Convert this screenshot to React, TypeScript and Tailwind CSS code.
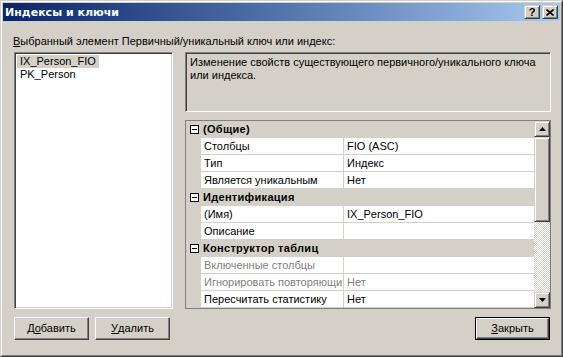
import React from 'react';

const font = { fontFamily: '"Liberation Sans", Arial, sans-serif' };
const boldFont = { fontFamily: '"DejaVu Sans", Verdana, sans-serif' };

const raised =
  'border border-t-white border-l-white border-r-[#404040] border-b-[#404040] shadow-[inset_-1px_-1px_#808080] bg-[#d4d0c8]';
const raisedSmall =
  'border border-t-[#d4d0c8] border-l-[#d4d0c8] border-r-[#404040] border-b-[#404040] shadow-[inset_1px_1px_#fff,inset_-1px_-1px_#808080] bg-[#d4d0c8]';
const sunken =
  'border border-t-[#808080] border-l-[#808080] border-r-white border-b-white shadow-[inset_1px_1px_#404040,inset_-1px_-1px_#d4d0c8]';

type Row =
  | { kind: 'cat'; label: string }
  | { kind: 'prop'; name: string; value: string; disabled?: boolean };

const rows: Row[] = [
  { kind: 'cat', label: '(Общие)' },
  { kind: 'prop', name: 'Столбцы', value: 'FIO (ASC)' },
  { kind: 'prop', name: 'Тип', value: 'Индекс' },
  { kind: 'prop', name: 'Является уникальным', value: 'Нет' },
  { kind: 'cat', label: 'Идентификация' },
  { kind: 'prop', name: '(Имя)', value: 'IX_Person_FIO' },
  { kind: 'prop', name: 'Описание', value: '' },
  { kind: 'cat', label: 'Конструктор таблиц' },
  { kind: 'prop', name: 'Включенные столбцы', value: '', disabled: true },
  { kind: 'prop', name: 'Игнорировать повторяющи', value: 'Нет', disabled: true },
  { kind: 'prop', name: 'Пересчитать статистику', value: 'Нет' },
];

const MinusBox = () => (
  <div className="w-[9px] h-[9px] border border-[#000] bg-white flex items-center justify-center">
    <div className="w-[5px] h-px bg-black" />
  </div>
);

const Arrow = ({ up }: { up?: boolean }) => (
  <svg width="7" height="4" viewBox="0 0 7 4">
    <path d={up ? 'M3.5 0 L7 4 L0 4 Z' : 'M0 0 L7 0 L3.5 4 Z'} fill="#000" />
  </svg>
);

const PropertyGrid = () => (
  <div className="h-[189px] border border-[#808080] bg-white flex">
    <div className="flex-1 flex flex-col">
      {rows.map((r, i) =>
        r.kind === 'cat' ? (
          <div key={i} className="h-[17px] bg-[#d4d0c8] flex items-center">
            <div className="w-[15px] flex justify-center pl-[1px]">
              <MinusBox />
            </div>
            <span className="pl-[2px] font-bold text-black tracking-[0.3px]">{r.label}</span>
          </div>
        ) : (
          <div key={i} className="h-[17px] flex">
            <div className="w-[15px] bg-[#d4d0c8]" />
            <div
              className={`w-[143px] border-b border-r border-[#d4d0c8] pl-[3px] pt-px flex items-center overflow-hidden whitespace-nowrap ${
                r.disabled ? 'text-[#808080]' : 'text-black'
              }`}
            >
              {r.name}
            </div>
            <div
              className={`flex-1 border-b border-[#d4d0c8] pl-[3px] pt-px flex items-center whitespace-nowrap ${
                r.disabled ? 'text-[#808080]' : 'text-black'
              }`}
            >
              {r.value}
            </div>
          </div>
        )
      )}
    </div>
    <div className="w-[16px] flex flex-col">
      <div className={`h-[16px] ${raisedSmall} flex items-center justify-center`}>
        <Arrow up />
      </div>
      <div className={`h-[85px] ${raisedSmall}`} />
      <div className="flex-1 bg-[repeating-conic-gradient(#d4d0c8_0_25%,#ffffff_0_50%)] bg-[length:2px_2px]" />
      <div className={`h-[16px] ${raisedSmall} flex items-center justify-center`}>
        <Arrow />
      </div>
    </div>
  </div>
);

const Button = ({ children, def }: { children: React.ReactNode; def?: boolean }) => (
  <div className={def ? 'border border-black' : ''}>
    <div
      className={`${raised} ${def ? 'w-[73px] h-[21px]' : 'w-[75px] h-[23px]'} flex items-center justify-center text-black`}
    >
      {children}
    </div>
  </div>
);

export default function App() {
  return (
    <div style={font} className="w-[563px] h-[357px] text-[11px] leading-[13px] select-none">
      <div className="w-full h-full border border-t-[#d4d0c8] border-l-[#d4d0c8] border-r-[#404040] border-b-[#404040]">
        <div className="w-full h-full border border-t-white border-l-white border-r-[#808080] border-b-[#808080] bg-[#d4d0c8] p-px flex flex-col">
          {/* title bar */}
          <div className="h-[18px] bg-gradient-to-r from-[#0a246a] to-[#a6caf0] flex items-center pl-[2px] pr-[2px]">
            <span style={boldFont} className="text-white font-bold flex-1">
              Индексы и ключи
            </span>
            <div className={`w-[16px] h-[14px] ${raisedSmall} flex items-center justify-center font-bold text-[11px] leading-none text-black`}>
              ?
            </div>
            <div className={`ml-[2px] w-[16px] h-[14px] ${raisedSmall} flex items-center justify-center`}>
              <svg width="8" height="7" viewBox="0 0 8 7">
                <path d="M0.5 0.5 L7.5 6.5 M7.5 0.5 L0.5 6.5" stroke="#000" strokeWidth="1.6" />
              </svg>
            </div>
          </div>

          {/* body */}
          <div className="flex-1 flex flex-col pt-[14px] pl-[10px] pr-[8px]">
            <div className="h-[13px] text-black">
              <span className="underline underline-offset-1">В</span>ыбранный элемент Первичный/уникальный ключ или индекс:
            </div>
            <div className="mt-[4px] flex gap-[12px] pl-[1px]">
              <div className={`w-[159px] h-[257px] bg-white ${sunken} p-[2px] flex flex-col items-start`}>
                <div className="h-[13px] px-[3px] bg-[#d4d0c8] text-black flex items-center">IX_Person_FIO</div>
                <div className="h-[13px] px-[3px] text-black flex items-center">PK_Person</div>
              </div>
              <div className="w-[366px] flex flex-col gap-[8px]">
                <div className={`h-[60px] ${sunken} px-[4px] py-[3px] text-black`}>
                  Изменение свойств существующего первичного/уникального ключа или индекса.
                </div>
                <PropertyGrid />
              </div>
            </div>
            <div className="mt-[8px] flex items-start pl-[1px]">
              <Button>
                Д<span className="underline underline-offset-1">о</span>бавить
              </Button>
              <div className="ml-[6px]">
                <Button>
                  <span className="underline underline-offset-1">У</span>далить
                </Button>
              </div>
              <div className="ml-auto mr-[2px]">
                <Button def>
                  <span className="underline underline-offset-1">З</span>акрыть
                </Button>
              </div>
            </div>
          </div>
        </div>
      </div>
    </div>
  );
}
